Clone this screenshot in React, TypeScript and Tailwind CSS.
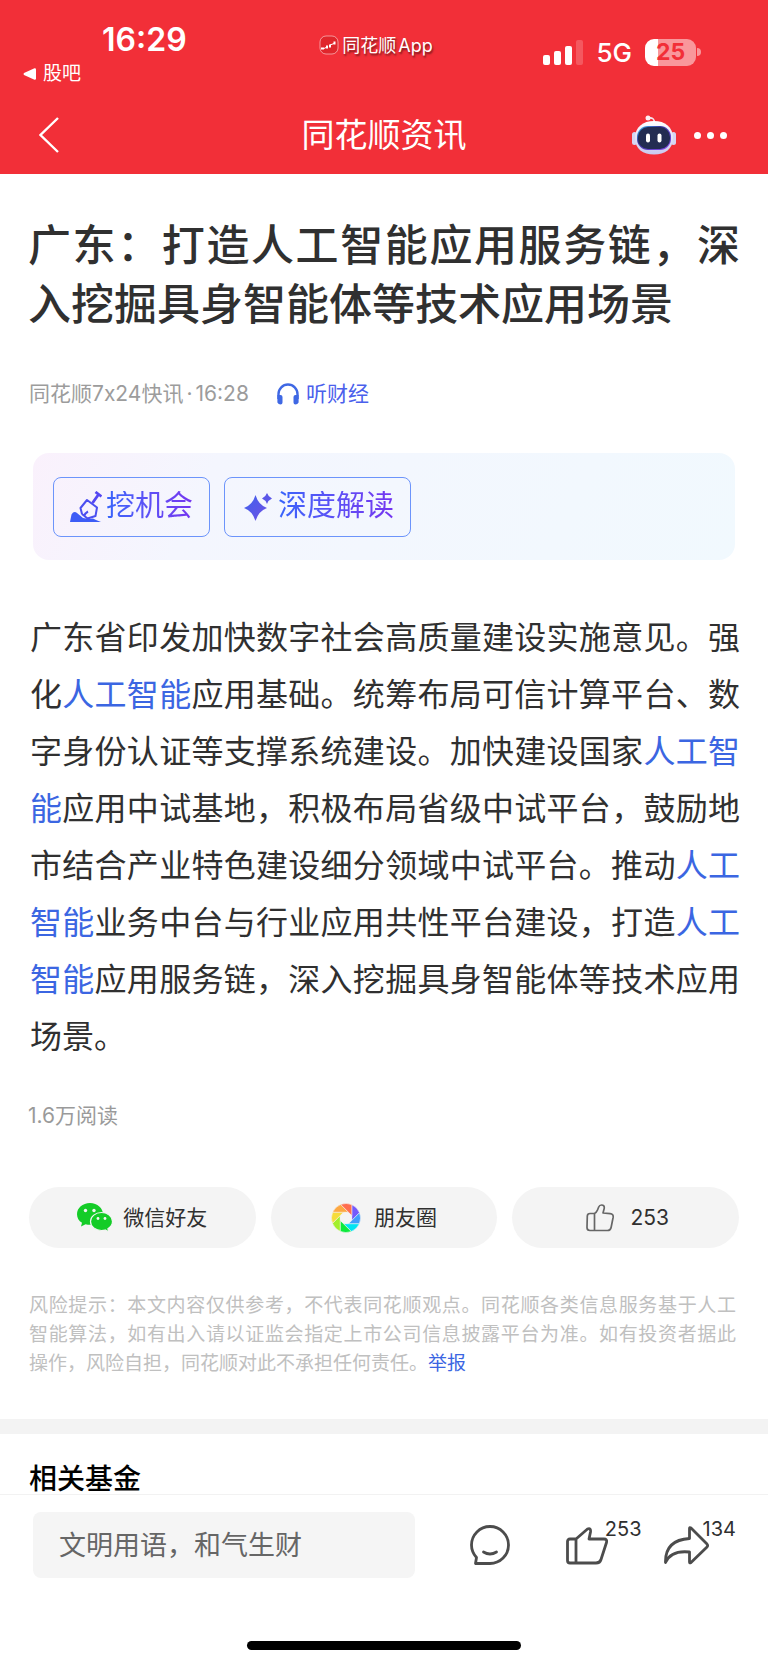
import { Fragment, type ReactNode } from 'react';

const KEYWORD = '人工智能';

const bodyText =
  '广东省印发加快数字社会高质量建设实施意见。强化人工智能应用基础。统筹布局可信计算平台、数字身份认证等支撑系统建设。加快建设国家人工智能应用中试基地，积极布局省级中试平台，鼓励地市结合产业特色建设细分领域中试平台。推动人工智能业务中台与行业应用共性平台建设，打造人工智能应用服务链，深入挖掘具身智能体等技术应用场景。';

// clockwise, starting right of the top
const momentsColors = ['#7459fb', '#3f9dfc', '#00e4f2', '#0bea3c', '#a3ef2b', '#f6dc3a', '#fda842', '#ff6d4e'];

function AppLogo() {
  return (
    <svg className="w-5 h-5" viewBox="0 0 20 20" fill="none">
      <rect x="1" y="1" width="18" height="18" rx="6" fill="#e0262c" stroke="#fff" strokeOpacity=".5" />
      <path d="M2 13.500h3M8 10.500v3M11 9.500v3M15.500 6.500v3" stroke="#fff" strokeWidth="2" />
      <path d="M5 13.500l2-1M11 10l4-1.500" stroke="#fff" strokeWidth="1" />
    </svg>
  );
}

function Signal() {
  return (
    <svg className="h-[25px] w-10" viewBox="0 0 40 25" fill="#fff">
      <rect x="0" y="15" width="7" height="10" rx="2" />
      <rect x="11" y="11" width="7" height="14" rx="2" />
      <rect x="22" y="6" width="7" height="19" rx="2" />
      <rect x="33" y="0" width="7" height="25" rx="2" opacity=".2" />
    </svg>
  );
}

function Battery() {
  return (
    <div className="flex items-center gap-px">
      <div className="flex h-[27px] w-[51px] items-center justify-center rounded-[9px] bg-[linear-gradient(90deg,#fff_25%,#f9979b_25%)] pt-px text-[23px] leading-none font-bold text-[#f22f38]">
        25
      </div>
      <div className="h-2 w-1 rounded-r-full bg-[#f9979b]" />
    </div>
  );
}

function Robot() {
  return (
    <svg className="h-10 w-11" viewBox="0 0 44 40">
      <defs>
        <linearGradient id="shell" x1="0" y1="0" x2="0" y2="1">
          <stop offset="0" stopColor="#fff" />
          <stop offset="1" stopColor="#c9c8ee" />
        </linearGradient>
        <linearGradient id="visor" x1="0" y1="0" x2="1" y2="1">
          <stop offset="0" stopColor="#39c5f5" />
          <stop offset=".35" stopColor="#3a36a0" />
          <stop offset="1" stopColor="#8c4df0" />
        </linearGradient>
      </defs>
      <path d="M16.500 3q6-1 6 5" fill="none" stroke="#f3e4f0" strokeWidth="1.600" />
      <circle cx="16" cy="3" r="2.500" fill="#fdeef2" />
      <rect x="0" y="17" width="5" height="13" rx="2.500" fill="#d5d6f3" />
      <rect x="39" y="17" width="5" height="13" rx="2.500" fill="#d5d6f3" />
      <path d="M22 6c11 0 19 6 19 17s-8 16.500-19 16.500S3 34 3 23 11 6 22 6z" fill="url(#shell)" />
      <rect x="5" y="11" width="34" height="24" rx="11" fill="url(#visor)" />
      <rect x="6" y="12" width="32" height="22" rx="10" fill="#232c52" />
      <rect x="14" y="18.500" width="4" height="9" rx="2" fill="#fff" />
      <rect x="25.500" y="18.500" width="4" height="9" rx="2" fill="#fff" />
    </svg>
  );
}

function Headphones() {
  return (
    <svg className="h-[22px] w-[22px]" viewBox="0 0 22 22" fill="none">
      <path d="M1.500 16v-5a9.500 9.500 0 0 1 19 0v5" stroke="#3f68e4" strokeWidth="2.400" />
      <path d="M.4 12H3.500q2 0 2 2v5.500q0 2-2 2t-3.100-2zM21.600 12H18.500q-2 0-2 2v5.500q0 2 2 2t3.100-2z" fill="#3f68e4" />
    </svg>
  );
}

function Shovel() {
  return (
    <svg className="h-8 w-8" viewBox="0 0 32 32" fill="none">
      <path d="M0 31l1.500-7.500q2.500-4 5.500-1.500l6 5 6 1 4-.500 3 1.500 5 2z" fill="#3d5cf6" />
      <path
        d="M12 23l-1.500-6L17 9l10 7.500-1.500 8.500-8 2.500-5.500-4.500M14 25.500q1-3.500 4-5"
        stroke="#4b4ff0"
        strokeWidth="2"
        strokeLinejoin="round"
      />
      <path d="M22.500 12l6-8.500M25.500 1l6 4.500" stroke="#5547f2" strokeWidth="2.800" />
    </svg>
  );
}

function Sparkles() {
  return (
    <svg className="h-7 w-7" viewBox="0 0 28 28">
      <defs>
        <linearGradient id="spark" x1="0" y1="0" x2="1" y2="1">
          <stop offset="0" stopColor="#3f62ee" />
          <stop offset="1" stopColor="#6f50e4" />
        </linearGradient>
      </defs>
      <path d="M11.500 2q3 10 11.500 13-8.500 3-11.500 13Q8.500 18 0 15 8.500 12 11.500 2z" fill="url(#spark)" />
      <path d="M23 0q1.400 4 5 5.500-3.600 1.500-5 5.500-1.400-4-5-5.500 3.600-1.500 5-5.500z" fill="#5b57e8" />
    </svg>
  );
}

function WeChat() {
  return (
    <svg className="h-[30px] w-9" viewBox="0 0 36 30">
      <path d="M13 0C5.500 0 0 5 0 11.200c0 3.600 1.800 6.600 5 8.600L4 23.500l4.600-2.300c1.400.4 2.900.6 4.400.6 7.500 0 13-4.800 13-10.600S20.500 0 13 0z" fill="#14cc27" />
      <path
        d="M24.500 9.500c-6 0-11 4-11 9s5 9 11 9c1.300 0 2.600-.2 3.700-.5l3.600 2-.9-3.200c2.700-1.700 4.600-4.300 4.600-7.300 0-5-5-9-11-9z"
        fill="#14cc27"
        stroke="#f4f4f4"
        strokeWidth="1.200"
      />
      <circle cx="8.500" cy="7.500" r="1.700" fill="#f4f4f4" />
      <circle cx="17" cy="7.500" r="1.700" fill="#f4f4f4" />
      <circle cx="21" cy="15.500" r="1.400" fill="#f4f4f4" />
      <circle cx="28" cy="15.500" r="1.400" fill="#f4f4f4" />
    </svg>
  );
}

function Moments() {
  return (
    <svg className="h-[30px] w-[30px]" viewBox="-15 -15 30 30">
      {momentsColors.map((color, i) => (
        <path
          key={color}
          d="M5.800-13.300V2.400L13.500-5.300A14.500 14.500 0 0 0 5.800-13.300z"
          transform={`rotate(${i * 45})`}
          fill={color}
          stroke="#f4f4f4"
          strokeWidth=".5"
        />
      ))}
      <circle r="5.800" fill="#f4f4f4" />
    </svg>
  );
}

function ThumbSmall() {
  return (
    <svg className="h-7 w-7" viewBox="0 0 28 28" fill="none" stroke="#666" strokeWidth="1.700" strokeLinejoin="round">
      <path d="M8.500 9.500H4Q1.500 9.500 1.300 12L1 23.500Q1 26.500 4 26.500h17.500q3 0 3.600-3l2-10q.6-3.500-3-3.800L17 9l1.200-4.500Q18.700 1 15.500 1q-2 0-2.800 2L11.500 6q-1 2.500-3 3.500zV26.500" />
    </svg>
  );
}

function Chat() {
  return (
    <svg className="h-10 w-10" viewBox="0 0 40 40" fill="none" stroke="#4c4c4c" strokeWidth="2.800" strokeLinejoin="round" strokeLinecap="round">
      <path d="M20 38.500a18.500 18.500 0 1 0-18.500-18.500q0 7 5 12.500L5.500 38.500z" />
      <path d="M13.500 27q6.500 4 13 0" />
    </svg>
  );
}

function Thumb() {
  return (
    <svg className="h-10 w-[42px]" viewBox="0 0 42 40" fill="none" stroke="#4c4c4c" strokeWidth="2.800" strokeLinejoin="round">
      <path d="M10 14H4q-2.500 0-2.500 2.500v19Q1.500 38 4 38h26q4 0 5-3.500l5.500-17q.8-3.500-2.500-3.500H23l1.500-7q.5-4.500-3-3L10 14zv24" />
    </svg>
  );
}

function Share() {
  return (
    <svg className="h-10 w-[45px]" viewBox="0 0 45 40" fill="none" stroke="#4c4c4c" strokeWidth="2.800" strokeLinejoin="round">
      <path d="M25.500 3.500q0-1.500 1.500-.5L43 19q1.200 1.500 0 3L27 37.500q-1.500 1-1.500-.5V27Q7 25 1.500 37.500 1 15 25.500 13.500z" />
    </svg>
  );
}

function PillButton({ icon, label }: { icon: ReactNode; label: string }) {
  return (
    <button className="flex h-[61px] flex-1 items-center justify-center rounded-full bg-[#f4f4f4] text-[21px] text-[#303030]">
      {icon}
      {label}
    </button>
  );
}

function AiButton({ icon, label }: { icon: ReactNode; label: string }) {
  return (
    <button className="flex h-[60px] items-center rounded-lg border border-[#6c94fb] px-4 text-[29px] leading-none">
      {icon}
      <span className="bg-linear-to-r from-[#3564fb] to-[#7434f0] bg-clip-text pb-[3px] text-transparent">{label}</span>
    </button>
  );
}

export default function App() {
  const parts = bodyText.split(KEYWORD);

  return (
    <div
      lang="zh-CN"
      className="bg-white font-['Inter','Noto_Sans_CJK_SC',sans-serif] text-[#303030]"
    >
      <header className="h-[174px] bg-[#f22f38] text-white">
        {/* Status bar */}
        <div className="grid h-24 grid-cols-3">
          <div className="pt-6 pl-[23px]">
            <div className="pl-[79px] text-[32px] leading-8 font-semibold">16:29</div>
            <a href="#" className="mt-1 flex items-center gap-[7px] text-[19px] leading-7">
              <svg className="h-3 w-[13px]" viewBox="0 0 13 12" fill="#fff">
                <path d="M1 5L11.500.200Q13 0 13 1.500v9Q13 12 11.500 11.800L1 7Q0 6 1 5z" />
              </svg>
              股吧
            </a>
          </div>
          <div className="flex items-center justify-center gap-[3px] pr-4 pb-[6px] text-[18px] text-shadow-[1px_2px_2px_rgb(0_0_0/0.5)]">
            <AppLogo />
            <span className="flex gap-[2px]">
              <span>同花顺</span>
              <span>App</span>
            </span>
          </div>
          <div className="flex items-center justify-end gap-[13px] pt-2 pr-[67px]">
            <Signal />
            <span className="text-[26px] font-medium">5G</span>
            <Battery />
          </div>
        </div>
        {/* Nav bar */}
        <div className="grid h-[78px] grid-cols-3 items-center">
          <button aria-label="返回" className="w-fit pl-[39px]">
            <svg className="h-9 w-5" viewBox="0 0 20 36" fill="none" stroke="#fff" strokeWidth="2.400">
              <path d="M19 1L1.500 18 19 35" />
            </svg>
          </button>
          <h1 className="text-center text-[33px] leading-none">同花顺资讯</h1>
          <div className="flex items-center justify-end gap-[18px] pr-[41px]">
            <button aria-label="智能助手">
              <Robot />
            </button>
            <button aria-label="更多" className="flex gap-[6px]">
              <span className="h-[7px] w-[7px] rounded-full bg-white" />
              <span className="h-[7px] w-[7px] rounded-full bg-white" />
              <span className="h-[7px] w-[7px] rounded-full bg-white" />
            </button>
          </div>
        </div>
      </header>

      <main>
        <article className="px-7 pt-[42px]">
          <h2 className="text-justify text-[43px] leading-[59px] font-medium">
            广东：打造人工智能应用服务链，深入挖掘具身智能体等技术应用场景
          </h2>

          <div className="mt-11 flex h-8 items-center px-px text-[21px] text-[#9c9c9c]">
            <span>同花顺7x24快讯</span>
            <span className="px-[3px]">·</span>
            <span>16:28</span>
            <a href="#" className="ml-7 flex items-center gap-[7px] text-[#4a60ec]">
              <Headphones />
              听财经
            </a>
          </div>

          <div className="mx-[5px] mt-[43px] flex h-[107px] items-center gap-[14px] rounded-2xl bg-[linear-gradient(115deg,#faf1fc_0%,#f4f6fe_25%,#f1f9fe_100%)] px-5">
            <AiButton icon={<span className="mr-1"><Shovel /></span>} label="挖机会" />
            <AiButton icon={<span className="mr-[6px] ml-[3px]"><Sparkles /></span>} label="深度解读" />
          </div>

          <p className="mt-[49px] pl-[2px] text-justify text-[32px] leading-[57px]">
            {parts.map((part, i) => (
              <Fragment key={i}>
                {i > 0 && (
                  <a href="#" className="text-[#3b66e2]">
                    {KEYWORD}
                  </a>
                )}
                {part}
              </Fragment>
            ))}
          </p>

          <div className="mt-[35px] text-[21px] leading-8 text-[#9a9a9a]">1.6万阅读</div>

          <div className="mx-px mt-[55px] flex gap-[15px]">
            <PillButton icon={<span className="mr-[10px]"><WeChat /></span>} label="微信好友" />
            <PillButton icon={<span className="mr-[13px]"><Moments /></span>} label="朋友圈" />
            <PillButton icon={<span className="mr-4 ml-1"><ThumbSmall /></span>} label="253" />
          </div>

          <p className="mt-[43px] mb-[41px] px-px pr-1 text-[19px] leading-[29px] text-[#c0c0c0]">
            <span className="block [text-align-last:justify]">
              风险提示：本文内容仅供参考，不代表同花顺观点。同花顺各类信息服务基于人工
            </span>
            <span className="block [text-align-last:justify]">
              智能算法，如有出入请以证监会指定上市公司信息披露平台为准。如有投资者据此
            </span>
            操作，风险自担，同花顺对此不承担任何责任。
            <a href="#" className="text-[#3b66e2]">举报</a>
          </p>
        </article>

        <section className="border-t-[15px] border-[#f3f3f3] px-[29px] pt-[26px]">
          <h3 className="h-[34px] text-[28px] leading-[38px] font-medium text-black">相关基金</h3>
        </section>
      </main>

      <footer className="border-t border-[#f2f2f2] bg-white">
        <div className="flex items-start pt-[17px] pr-8 pl-[33px]">
          <input
            type="text"
            aria-label="评论"
            placeholder="文明用语，和气生财"
            className="h-[66px] min-w-0 flex-1 rounded-lg bg-[#f5f5f5] px-[26px] text-[27px] placeholder:text-[#666]"
          />
          <button aria-label="评论列表" className="mt-[13px] ml-[55px]">
            <Chat />
          </button>
          <button aria-label="点赞" className="mt-[7px] ml-[56px] flex items-start">
            <span className="mt-[6px]"><Thumb /></span>
            <span className="-ml-[3px] text-[20px] leading-5">253</span>
          </button>
          <button aria-label="分享" className="mt-[7px] ml-[22px] flex items-start">
            <span className="mt-[6px]"><Share /></span>
            <span className="-ml-[6px] text-[20px] leading-5">134</span>
          </button>
        </div>
        <div className="mx-auto mt-[63px] mb-[14px] h-[9px] w-[274px] rounded-full bg-black" />
      </footer>
    </div>
  );
}
